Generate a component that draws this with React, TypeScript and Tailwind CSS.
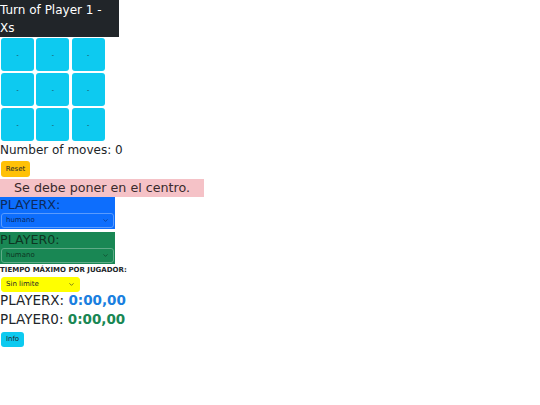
import { ChevronDown } from 'lucide-react'

const cells = Array.from({ length: 9 }, (_, i) => i)

const SelectBox = ({ label, className }: { label: string; className: string }) => (
  <div className={`flex items-center justify-between rounded-[3px] border px-[4px] text-[7px] ${className}`}>
    <span>{label}</span>
    <ChevronDown className="h-[7px] w-[7px]" strokeWidth={2} />
  </div>
)

const App = () => {
  return (
    <div className="min-h-[405px] w-[540px] bg-white text-[#212529]" style={{ fontFamily: '"DejaVu Sans", sans-serif' }}>
      {/* Header */}
      <div className="w-[119px] bg-[#212529] pt-[1px] text-[12px] leading-[18px] text-white">
        Turn of Player 1 - Xs
      </div>

      {/* Board */}
      <div className="ml-[1px] mt-[1px] grid w-[104px] grid-cols-3 gap-[2px]">
        {cells.map((c) => (
          <button
            key={c}
            className="flex h-[33px] w-[33px] items-center justify-center rounded-[3px] bg-[#0dcaf0] text-[6px] text-[#212529]"
          >
            -
          </button>
        ))}
      </div>

      <div className="mt-[1px] text-[12px] leading-[17px]">Number of moves: 0</div>

      <button className="ml-[1px] mt-[2px] flex h-[16px] w-[29px] items-center justify-center rounded-[3px] bg-[#ffc107] text-[7px] text-[#212529]">
        Reset
      </button>

      <div className="mt-[2px] w-[204px] bg-[#f5c2c7] pl-[14px] text-[12.7px] leading-[18px] text-[#3a2a2c]">
        Se debe poner en el centro.
      </div>

      {/* Player X */}
      <div className="w-[115px] bg-[#0d6efd] pb-[1px]">
        <div className="text-[12.7px] leading-[16px] text-[#0c2a5c]">PLAYERX:</div>
        <SelectBox label="humano" className="mx-[1px] h-[15px] border-[#5a9bfd] bg-[#0d6efd] text-[#0a2a5e]" />
      </div>

      {/* Player 0 */}
      <div className="mt-[3px] w-[115px] bg-[#198754] pb-[1px]">
        <div className="text-[12.7px] leading-[16px] text-[#0d3522]">PLAYER0:</div>
        <SelectBox label="humano" className="mx-[1px] h-[15px] border-[#5fab87] bg-[#198754] text-[#0d3522]" />
      </div>

      <div className="mt-[1px] text-[7px] font-bold leading-[10px]">TIEMPO MÁXIMO POR JUGADOR:</div>
      <SelectBox label="Sin limite" className="ml-[1px] mt-[2px] h-[15px] w-[79px] border-[#ffff00] bg-[#ffff00] text-[#212529]" />

      <div className="text-[13.5px] leading-[16px]">
        PLAYERX: <span className="font-bold text-[#1a7fe0]">0:00,00</span>
      </div>
      <div className="mt-[3px] text-[13.5px] leading-[16px]">
        PLAYER0: <span className="font-bold text-[#198754]">0:00,00</span>
      </div>

      <button className="ml-[1px] mt-[5px] flex h-[15px] w-[23px] items-center justify-center rounded-[3px] bg-[#0dcaf0] text-[7px] text-[#212529]">
        Info
      </button>
    </div>
  )
}

export default App
